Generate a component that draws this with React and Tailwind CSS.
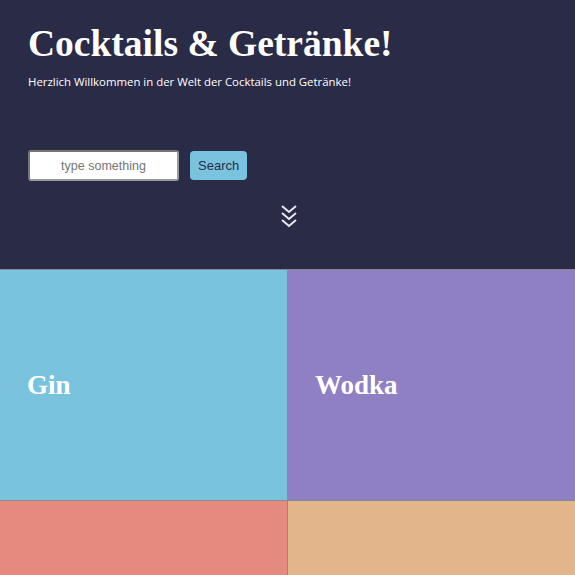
const tiles = [
  { name: 'Gin', bg: 'bg-[#7ac3df]' },
  { name: 'Wodka', bg: 'bg-[#8f80c4]' },
  { name: '', bg: 'bg-[#e68a80]' },
  { name: '', bg: 'bg-[#e2b68a]' },
];

const ChevronsDown = () => (
  <svg width="18" height="26" viewBox="0 0 18 26" fill="none" stroke="#e8e8f0" strokeWidth="2">
    <path d="M2 2l7 6 7-6" />
    <path d="M2 9l7 6 7-6" />
    <path d="M2 16l7 6 7-6" />
  </svg>
);

export default function App() {
  return (
    <div className="w-[575px] h-[575px] overflow-hidden bg-[#8a8a95]">
      {/* Header */}
      <header className="h-[269px] bg-[#2a2b47] px-[28px] pt-[22px] text-white">
        <h1 className="font-['Liberation_Serif',serif] font-bold text-[37.5px] leading-[44px]">
          Cocktails &amp; Getränke!
        </h1>
        <p className="mt-[8px] font-['Open_Sans',sans-serif] text-[11.4px] leading-[16px]">
          Herzlich Willkommen in der Welt der Cocktails und Getränke!
        </p>

        <div className="mt-[60px] flex items-center gap-[11px]">
          <input
            type="text"
            placeholder="type something"
            className="w-[151px] h-[31px] rounded-[3px] border-2 border-t-[#777] border-l-[#777] border-r-[#999] border-b-[#999] bg-white text-center font-['Liberation_Sans',sans-serif] text-[12.5px] text-[#444] placeholder:text-[#757575] outline-none"
          />
          <button className="h-[29px] px-[8px] rounded-[4px] bg-[#7ac3df] font-['Liberation_Sans',sans-serif] text-[13px] text-[#2a2b47]">
            Search
          </button>
        </div>

        <div className="mt-[23px] flex justify-center pl-[2px]">
          <ChevronsDown />
        </div>
      </header>

      {/* Tiles */}
      <div className="mt-px grid grid-cols-2 gap-px">
        {tiles.map((t, i) => (
          <div key={i} className={`h-[230px] ${t.bg} flex items-center px-[27px] pt-[1px]`}>
            {t.name && (
              <span className="font-['Liberation_Serif',serif] font-bold text-[27px] text-white">
                {t.name}
              </span>
            )}
          </div>
        ))}
      </div>
    </div>
  );
}
